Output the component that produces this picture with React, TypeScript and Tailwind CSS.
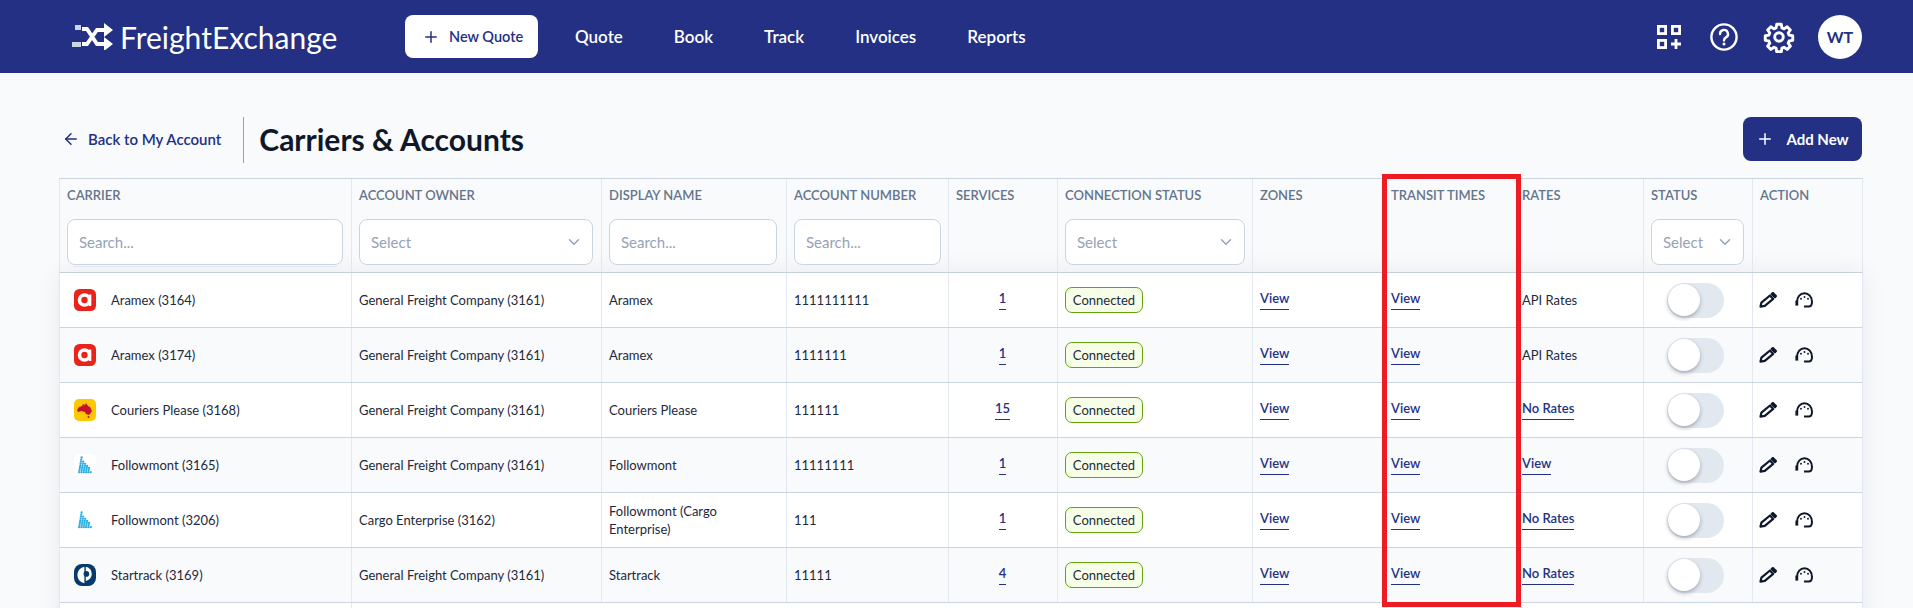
import { ArrowLeft, ChevronDown, Plus } from "lucide-react";

const gridCols =
  "grid grid-cols-[292px_250px_185px_162px_109px_195px_131px_133px_127px_109px_109px]";

type Logo = "aramex" | "couriers" | "followmont" | "startrack";

interface Row {
  carrier: string;
  logo: Logo;
  owner: string;
  display: string;
  account: string;
  services: string;
  rates: string;
  ratesLink: boolean;
}

const rows: Row[] = [
  { carrier: "Aramex (3164)", logo: "aramex", owner: "General Freight Company (3161)", display: "Aramex", account: "1111111111", services: "1", rates: "API Rates", ratesLink: false },
  { carrier: "Aramex (3174)", logo: "aramex", owner: "General Freight Company (3161)", display: "Aramex", account: "1111111", services: "1", rates: "API Rates", ratesLink: false },
  { carrier: "Couriers Please (3168)", logo: "couriers", owner: "General Freight Company (3161)", display: "Couriers Please", account: "111111", services: "15", rates: "No Rates", ratesLink: true },
  { carrier: "Followmont (3165)", logo: "followmont", owner: "General Freight Company (3161)", display: "Followmont", account: "11111111", services: "1", rates: "View", ratesLink: true },
  { carrier: "Followmont (3206)", logo: "followmont", owner: "Cargo Enterprise (3162)", display: "Followmont (Cargo Enterprise)", account: "111", services: "1", rates: "No Rates", ratesLink: true },
  { carrier: "Startrack (3169)", logo: "startrack", owner: "General Freight Company (3161)", display: "Startrack", account: "11111", services: "4", rates: "No Rates", ratesLink: true },
];

// dots of the followmont sail, row by row
const sailDots: [number, number][] = [];
for (let i = 0; i < 8; i++) {
  const count = Math.floor(i * 0.8) + 1;
  for (let j = 0; j < count; j++) {
    sailDots.push([7.6 - i * 0.35 + j * 2.3, 3.5 + i * 2.1]);
  }
}

function CarrierLogo({ logo }: { logo: Logo }) {
  if (logo === "aramex") {
    return (
      <svg viewBox="0 0 22 22" className="w-[22px] h-[22px] shrink-0">
        <rect width="22" height="22" rx="5.5" fill="#e8231a" />
        <circle cx="10.5" cy="11" r="5" fill="none" stroke="#fff" strokeWidth="3.6" />
        <path d="M16 5.5V17" stroke="#fff" strokeWidth="2.6" />
      </svg>
    );
  }
  if (logo === "couriers") {
    return (
      <svg viewBox="0 0 22 22" className="w-[22px] h-[22px] shrink-0">
        <rect width="22" height="22" rx="5" fill="#fdc800" />
        <path d="M3 11l2-3 3-1 1-2 2 1 1-2 2 3 2 1 2 4-2 3-1 1-3-1-1-2-4-1-3 1z" fill="#c8102e" />
        <circle cx="14.5" cy="18" r="1" fill="#c8102e" />
      </svg>
    );
  }
  if (logo === "followmont") {
    return (
      <svg viewBox="0 0 22 22" className="w-[22px] h-[22px] shrink-0">
        <rect width="22" height="22" rx="5" fill="#fff" />
        {sailDots.map(([x, y]) => (
          <circle key={`${x}-${y}`} cx={x} cy={y} r="1.15" fill="#29abe2" />
        ))}
      </svg>
    );
  }
  return (
    <svg viewBox="0 0 22 22" className="w-[22px] h-[22px] shrink-0">
      <rect width="22" height="22" rx="8" fill="#063a6b" />
      <path d="M10.4 2.8a8.3 8.3 0 0 0 0 16.4z" fill="#fff" />
      <path d="M11.8 2.8a7.2 7.2 0 0 1 0 14.2z" fill="#fff" />
      <circle cx="12.4" cy="9.9" r="2.8" fill="#063a6b" />
    </svg>
  );
}

function ViewLink({ children }: { children: string }) {
  return (
    <a className="inline-block pb-[2px] border-b border-[#233083] text-[13px] leading-[17px] font-semibold text-[#233083]">
      {children}
    </a>
  );
}

function SearchBox({ className }: { className: string }) {
  return (
    <div className={`h-[46px] flex items-center pl-[11px] bg-white border border-[#cbd5e1] rounded-lg text-[15px] text-[#94a3b8] ${className}`}>
      Search...
    </div>
  );
}

function SelectBox({ className }: { className: string }) {
  return (
    <div className={`h-[46px] flex items-center justify-between pl-[11px] pr-[9px] bg-white border border-[#cbd5e1] rounded-lg text-[15px] text-[#94a3b8] ${className}`}>
      Select
      <ChevronDown className="w-[18px] h-[18px] text-[#94a3b8]" />
    </div>
  );
}

function HeadCell({ label, pad = "pl-[7px] pr-2", children }: { label: string; pad?: string; children?: React.ReactNode }) {
  return (
    <div className={`h-[93px] pt-[7px] border-r border-[#e2e8f0] last:border-r-0 ${pad}`}>
      <p className="h-[18px] leading-[18px] text-[13px] font-semibold text-[#64748b] whitespace-nowrap">{label}</p>
      <div className="mt-[15px]">{children}</div>
    </div>
  );
}

function Cell({ className = "", children }: { className?: string; children: React.ReactNode }) {
  return (
    <div className={`flex items-center pl-[7px] pr-2 border-r border-[#e2e8f0] last:border-r-0 ${className}`}>
      {children}
    </div>
  );
}

function Pencil() {
  return (
    <svg viewBox="0 0 18 16" className="w-[18px] h-[16px]" fill="none" stroke="#0f172a" strokeWidth="2.2" strokeLinejoin="round">
      <path d="M1.5 14.6l.9-3.9 8.6-7.2 3.2 3.4-8.4 7z" />
      <path d="M12.8 1.9l1.1-.9 3 3.1-1 1.1z" fill="#0f172a" />
    </svg>
  );
}

function Gauge() {
  return (
    <svg viewBox="0 0 19 16" className="w-[19px] h-[16px]" fill="none" stroke="#0f172a" strokeWidth="2">
      <path d="M2 10C2 4.6 5.4 1.2 9.5 1.2S17 4.6 17 10c0 2.8-1.2 4.6-3.4 4.6H9" />
      <rect x="0.4" y="8.6" width="2.8" height="5" fill="#0f172a" stroke="none" />
      <circle cx="6" cy="6.8" r="0.95" fill="#0f172a" stroke="none" />
      <circle cx="9.5" cy="5" r="0.95" fill="#0f172a" stroke="none" />
      <circle cx="13" cy="6.8" r="0.95" fill="#0f172a" stroke="none" />
    </svg>
  );
}

export default function App() {
  return (
    <div className="relative h-screen overflow-hidden bg-[#f8fafc] text-[13px] leading-[18px] text-[#1e293b] font-['Lato','Noto_Sans',sans-serif]">
      {/* top bar */}
      <header className="h-[73px] bg-[#233083] flex items-center pl-[72px] pr-[51px]">
        <div className="flex items-center w-[333px] text-white">
          <svg viewBox="0 0 42 27" className="w-[42px] h-[27px] shrink-0" fill="none" stroke="#fff">
            <path d="M10 21h5L25 7h9M10 6h5l10 15h9" strokeWidth="3.8" />
            <path d="M32 0l9 7-9 7zM32 14l9 7-9 7z" fill="#fff" stroke="none" />
            <rect x="3" y="2" width="6" height="5" fill="#cbd5e1" stroke="none" />
            <rect x="0" y="19" width="9" height="5" fill="#cbd5e1" stroke="none" />
          </svg>
          <span className="ml-[6px] text-[30px] leading-none">FreightExchange</span>
        </div>
        <button className="w-[133px] h-[43px] flex items-center pl-[17px] gap-[9px] bg-white rounded-lg text-[14.5px] font-semibold text-[#233083]">
          <Plus className="w-[18px] h-[18px]" />
          New Quote
        </button>
        <nav className="flex items-center gap-[51px] ml-[37px] text-[17px] font-semibold text-white">
          <span>Quote</span>
          <span>Book</span>
          <span>Track</span>
          <span>Invoices</span>
          <span>Reports</span>
        </nav>
        <div className="ml-auto flex items-center">
          <svg viewBox="0 0 24 24" className="w-[24px] h-[24px] text-white" fill="none" stroke="currentColor" strokeWidth="2.8">
            <rect x="1.4" y="1.4" width="7.2" height="7.2" />
            <rect x="15.4" y="1.4" width="7.2" height="7.2" />
            <rect x="1.4" y="15.4" width="7.2" height="7.2" />
            <path d="M19 14v10M14 19h10" />
          </svg>
          <svg viewBox="0 0 28 28" className="ml-[29px] w-[28px] h-[28px] text-white" fill="none" stroke="currentColor" strokeWidth="2.4">
            <circle cx="14" cy="14" r="12.6" />
            <path d="M10 11a4 4 0 1 1 6 3.4c-1.4.8-2 1.5-2 3" strokeLinecap="round" />
            <circle cx="14" cy="21" r="1.5" fill="currentColor" stroke="none" />
          </svg>
          <svg viewBox="0 0 24 24" className="ml-[25px] w-[32px] h-[32px] text-white" fill="none" stroke="currentColor" strokeWidth="2.2" strokeLinejoin="round">
            <path d="M10.3 2.5h3.4l.5 2.7 1.6.7 2.3-1.6 2.4 2.4-1.6 2.3.7 1.6 2.7.5v3.4l-2.7.5-.7 1.6 1.6 2.3-2.4 2.4-2.3-1.6-1.6.7-.5 2.7h-3.4l-.5-2.7-1.6-.7-2.3 1.6-2.4-2.4 1.6-2.3-.7-1.6-2.7-.5v-3.4l2.7-.5.7-1.6-1.6-2.3 2.4-2.4 2.3 1.6 1.6-.7z" />
            <circle cx="12" cy="12" r="3.2" />
          </svg>
          <div className="ml-[23px] w-[44px] h-[44px] flex items-center justify-center rounded-full bg-white text-base font-bold text-[#233083]">
            WT
          </div>
        </div>
      </header>

      <main className="pl-[59px] pr-[50px]">
        {/* title row */}
        <div className="h-[105px] pt-[44px] flex items-start">
          <a className="h-[46px] pb-[2px] flex items-center gap-2 pl-[3px] pr-[22px] border-r border-[#94a3b8] text-[15px] font-semibold text-[#233083]">
            <ArrowLeft className="w-[18px] h-[18px]" />
            Back to My Account
          </a>
          <h1 className="ml-[15px] h-[46px] pb-[2px] flex items-center text-[30px] font-bold text-[#0f172a]">Carriers &amp; Accounts</h1>
          <button className="ml-auto mr-px w-[119px] h-[44px] flex items-center justify-center gap-3 rounded-lg bg-[#233083] text-[15px] font-bold text-white">
            <Plus className="w-[18px] h-[18px]" />
            Add New
          </button>
        </div>

        {/* column heads */}
        <div className={`${gridCols} border border-[#cbd5e1] border-x-[#e2e8f0] bg-[#f8fafc]`}>
          <HeadCell label="CARRIER">
            <SearchBox className="w-[276px]" />
            <div className="h-px mt-px mx-[6px] bg-[#e2e8f0]" />
          </HeadCell>
          <HeadCell label="ACCOUNT OWNER"><SelectBox className="w-full" /></HeadCell>
          <HeadCell label="DISPLAY NAME"><SearchBox className="w-[168px]" /></HeadCell>
          <HeadCell label="ACCOUNT NUMBER"><SearchBox className="w-[147px]" /></HeadCell>
          <HeadCell label="SERVICES" />
          <HeadCell label="CONNECTION STATUS"><SelectBox className="w-[180px]" /></HeadCell>
          <HeadCell label="ZONES" />
          <HeadCell label="TRANSIT TIMES" />
          <HeadCell label="RATES" pad="pl-[5px] pr-2" />
          <HeadCell label="STATUS"><SelectBox className="w-[93px]" /></HeadCell>
          <HeadCell label="ACTION" />
        </div>

        {/* rows */}
        <div className="shadow-[0_0_24px_rgba(15,23,42,0.07)]">
          {rows.map((row, idx) => (
            <div
              key={row.carrier}
              className={`${gridCols} h-[55px] border-x border-b border-[#cbd5e1] border-x-[#e2e8f0] ${idx % 2 === 0 ? "bg-white" : "bg-[#f8fafc]"}`}
            >
              <Cell className="!pl-[14px] gap-[15px]">
                <CarrierLogo logo={row.logo} />
                <span>{row.carrier}</span>
              </Cell>
              <Cell>{row.owner}</Cell>
              <Cell>{row.display}</Cell>
              <Cell>{row.account}</Cell>
              <Cell className="justify-center"><ViewLink>{row.services}</ViewLink></Cell>
              <Cell>
                <span className="h-[26px] w-[78px] flex items-center justify-center rounded-[7px] border border-[#65a30d] bg-[#f7fee7]">
                  Connected
                </span>
              </Cell>
              <Cell><ViewLink>View</ViewLink></Cell>
              <Cell><ViewLink>View</ViewLink></Cell>
              <Cell className="!pl-[5px]">
                {row.ratesLink ? <ViewLink>{row.rates}</ViewLink> : <span>{row.rates}</span>}
              </Cell>
              <Cell className="!pl-[23px]">
                <span className="w-[57px] h-[35px] shrink-0 flex items-center pl-px rounded-full bg-[#e2e8f0]">
                  <span className="w-[32px] h-[32px] rounded-full bg-white shadow-[0_2px_4px_rgba(15,23,42,0.3)]" />
                </span>
              </Cell>
              <Cell className="gap-[18px] !pl-[6px]">
                <Pencil />
                <Gauge />
              </Cell>
            </div>
          ))}
          <div className={`${gridCols} h-[55px] border-x border-[#e2e8f0] bg-white`}>
            <div className="border-r border-[#e2e8f0]" />
          </div>
        </div>
      </main>

      {/* red highlight drawn over the transit times column */}
      <div className="absolute left-[1382px] top-[174px] w-[139px] h-[433px] border-[5px] border-[#ed1c24] pointer-events-none" />
    </div>
  );
}
